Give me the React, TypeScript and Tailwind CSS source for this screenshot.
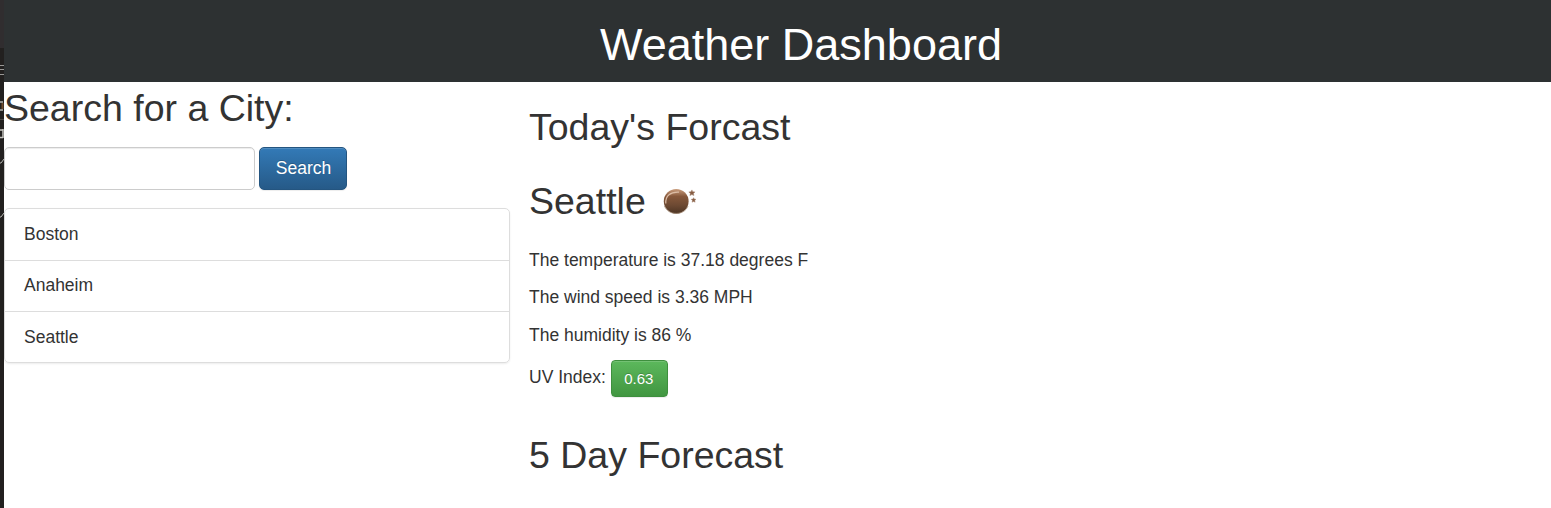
const cities = ['Boston', 'Anaheim', 'Seattle'];

const readings = [
  'The temperature is 37.18 degrees F',
  'The wind speed is 3.36 MPH',
  'The humidity is 86 %',
];

function EdgeStrip() {
  return (
    <svg className="block h-[508px] w-1 shrink-0" viewBox="0 0 4 508" fill="none" aria-hidden="true">
      <rect width="4" height="508" fill="#22201f" />
      <rect width="4" height="48" fill="#302d2f" />
      <path d="M0 65.5h4M0 69.5h4M0 74.5h4" stroke="#989896" />
      <path d="M0 102h3M0 110h3" stroke="#b5b4b0" strokeWidth="1.5" />
      <path d="M2.5 103v6" stroke="#6e4b2c" strokeWidth="2" />
      <path d="M0 119.5h4" stroke="#4a4846" />
      <path d="M0 130h3M3 129v9M0 137.5h3" stroke="#c5c4c0" strokeWidth="1.5" />
      <path d="M0 163l1 0l3-4M0 217l1 0l3-4" stroke="#b9b8b4" />
    </svg>
  );
}

function MoonIcon() {
  return (
    <svg className="mb-px ml-[14px] h-[30px] w-9 shrink-0" viewBox="0 0 36 30" aria-hidden="true">
      <defs>
        <linearGradient id="moon" x1="0" y1="0" x2="0" y2="1">
          <stop offset="0" stopColor="#cc9f7f" />
          <stop offset="0.3" stopColor="#86583b" />
          <stop offset="0.65" stopColor="#6e4a33" />
          <stop offset="1" stopColor="#4d3524" />
        </linearGradient>
      </defs>
      <circle cx="16.2" cy="15.3" r="12.4" fill="url(#moon)" />
      <path d="M5.8 17.5C5.2 10 10.5 5.5 19 6.1" fill="none" stroke="#dcbda6" strokeWidth="1.2" />
      <path d="M4.5 20C6.5 25 11 27.4 16.2 27.4S26 25 28 20" fill="none" stroke="#a58c76" strokeWidth=".8" />
      <path d="M31.9 3.9l.9 1.8 2.2.2-1.5 1.5.4 2.2-2-1-2 1 .4-2.2-1.5-1.5 2.2-.2zM33.6 11.7l.7 1.4 1.7.2-1.2 1.2.3 1.7-1.5-.8-1.5.8.3-1.7-1.2-1.2 1.7-.2z" fill="#875c42" stroke="#a98a76" strokeWidth=".5" />
    </svg>
  );
}

export default function App() {
  return (
    <div className="flex h-[508px] w-full overflow-hidden bg-white font-['Liberation_Sans',Arial,sans-serif] text-[17.5px] leading-[25px] text-[#333]">
      <EdgeStrip />
      <div className="min-w-0 flex-1">
        <header className="flex h-[82px] justify-center bg-[#2d3132] pt-5 pl-[47px]">
          <h1 className="text-[45px] leading-[49px] text-white">Weather Dashboard</h1>
        </header>
        <div className="flex">
          <aside className="w-[506px] shrink-0 pt-[6px]">
            <h2 className="text-[37.5px] leading-[41px]">Search for a City:</h2>
            <form className="mt-[18px] flex gap-1" onSubmit={(e) => e.preventDefault()}>
              <input
                aria-label="City"
                className="h-[43px] w-[251px] rounded-[5px] border border-[#ccc] bg-white px-4 shadow-[inset_0_1px_1px_rgba(0,0,0,0.075)] outline-none"
              />
              <button className="h-[43px] w-[88px] rounded-[5px] border border-[#245580] bg-linear-to-b from-[#337ab7] to-[#265a88] pb-px pl-px text-white shadow-[inset_0_1px_0_rgba(255,255,255,0.15),0_1px_1px_rgba(0,0,0,0.075)] [text-shadow:0_-1px_0_rgba(0,0,0,0.2)]">
                Search
              </button>
            </form>
            <ul className="mt-[18px] h-[155px] divide-y divide-[#ddd] rounded-[5px] border border-[#ddd] shadow-[0_1px_2px_rgba(0,0,0,0.075)]">
              {cities.map((city) => (
                <li key={city} className="h-[51px] px-[19px] pt-[13px] first:h-[52px] even:pt-3">
                  {city}
                </li>
              ))}
            </ul>
          </aside>
          <main className="pt-[25px] pl-[19px]">
            <h2 className="text-[37.5px] leading-[41px]">Today's Forcast</h2>
            <div className="mt-[33px] flex items-center">
              <h2 className="text-[37.5px] leading-[41px]">Seattle</h2>
              <MoonIcon />
            </div>
            <div className="mt-[26px] flex flex-col">
              {readings.map((line) => (
                <p key={line} className="mb-3 last:mt-px last:mb-0">{line}</p>
              ))}
            </div>
            <div className="mt-[12px] flex gap-[5px]">
              <p className="pt-[5px]">UV Index:</p>
              <button className="h-[37px] w-[57px] rounded-[4px] border border-[#3e8f3e] bg-linear-to-b from-[#5cb85c] to-[#419641] pr-px text-[15px] text-white shadow-[inset_0_1px_0_rgba(255,255,255,0.15),0_1px_1px_rgba(0,0,0,0.075)] [text-shadow:0_-1px_0_rgba(0,0,0,0.2)]">
                0.63
              </button>
            </div>
            <h2 className="mt-[38px] text-[37.5px] leading-[41px]">5 Day Forecast</h2>
          </main>
        </div>
      </div>
    </div>
  );
}
